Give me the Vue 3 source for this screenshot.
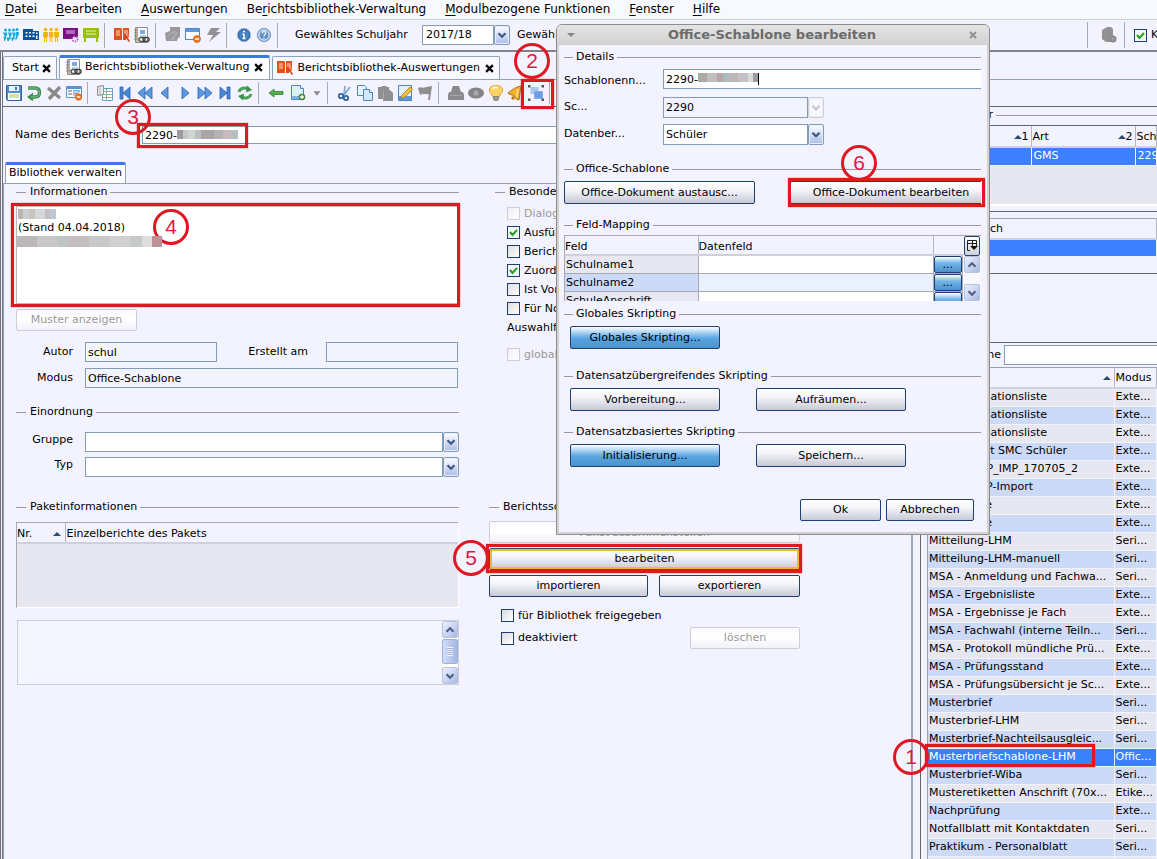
<script setup>
import { ref } from 'vue'

const icons = {
  pupils: '<g fill="#19a9dc"><circle cx="2.500" cy="3" r="1.500"/><circle cx="6.500" cy="3" r="1.500"/><circle cx="10.500" cy="3" r="1.500"/><circle cx="14" cy="2.500" r="1.500"/><path d="M0 5.500h4v3l-1 1v3H1.500v-4zM5 5.500h3.500v3l-1 1v3H6v-4zM9 5.500h3.500v3l-1 1v3H10v-4zM13 5h3l-.5 3.500-1 1v2H13zM0 10h2v4H1v-3zM3.500 10.500H6V14H4.500zM8 10.500h2V14H9zM12 10.500h2L13 14z"/></g>',
  school: '<path d="M0 2h10v2h6v9H0z" fill="#07539b"/><path d="M2.500 5h2v1.500h-2zm3.500 0h2v1.500H6zm3.500 0h2v1.500h-2zM2.500 8.500h2V10h-2zm3.500 0h2V10H6zm3.500 0h2V10h-2zM13 5.500h1.500V7H13zm0 3h1.500V12H13z" fill="#fff"/>',
  parents: '<g fill="#f5b50a"><circle cx="2.500" cy="2.500" r="1.800"/><circle cx="8" cy="2.500" r="1.800"/><circle cx="13.500" cy="2.500" r="1.800"/><path d="M0 5h5v5H4v5H3v-4H2v4H1v-5H0zM5.800 5h4.400v5H9.500v5h-1v-4h-1v4h-1v-5h-.7zM11 5h5v5h-1v5h-1v-4h-1v4h-1v-5h-1z"/></g>',
  boardPurple: '<path d="M0 1h15v9h-5l-1 2H0z" fill="#7b0f86"/><path d="M3 4h9M3 6h9" stroke="#e3c3e6"/><circle cx="12" cy="12" r="2.500" fill="none" stroke="#b45fba" stroke-width="2" stroke-dasharray="1.500 1"/>',
  boardGreen: '<path d="M0 1h16v10H0zM1 11h2v4H1zM13 11h2v4h-2z" fill="#97bf0d"/><path d="M3 4h10M3 7h10" stroke="#e9f3c3"/>',
  book: '<path d="M0 1h7l1 1V13H0zM9 1h6v8l-3-2v6H9z" fill="#e2501b"/><path d="M2 4h4M2 6h4M2 8h4M10 4h4M10 6h4" stroke="#fbd9cb"/><path d="M10 7l6 3-2.300.5L16 14l-1.500 1-2-3.500-2 1.500z" fill="#d94716"/>',
  report: '<path d="M1.500.5h12v15h-12z" fill="#fafbfd" stroke="#8d8d90"/><path d="M3 1v14" stroke="#9a7440"/><path d="M0 3h4M0 6h4M0 9h4M0 12h4" stroke="#888"/><path d="M6 3h5v4H6z" fill="#7facdf"/><path d="M6 9h6" stroke="#7facdf"/><rect x="5" y="10.500" width="6" height="4" rx="2" fill="none" stroke="#555" stroke-width="1.500"/><rect x="9" y="10.500" width="6" height="4" rx="2" fill="none" stroke="#444" stroke-width="1.500"/>',
  tiles: '<path d="M5 0h10v10l-2 1-1 3H1L0 6l2-1 3-1z" fill="#9a9a9c"/><path d="M3 9l3-3h3v-2l3 2-3 3v3H6l3-2" stroke="#b5b5b8" fill="none" stroke-width="1"/>',
  windowMinus: '<path d="M.5 1.500h14v11H.5z" fill="#fdfdff" stroke="#4b87c5"/><path d="M1 2h13v3H1z" fill="#5d9bd8"/><circle cx="12" cy="12" r="3.500" fill="#ef7622" stroke="#d45a10" stroke-width=".7"/><path d="M10 12h4" stroke="#fff" stroke-width="1.500"/>',
  bolt: '<path d="M6 1h9l-4 4h5L4 15l4-7H2z" fill="#929294"/>',
  info: '<circle cx="8" cy="8" r="6.700" fill="#4b83c1" stroke="#9db9da"/><circle cx="8" cy="8" r="5.500" fill="none" stroke="#2f65a5"/><path d="M8 7v4M6.500 7H8M6.500 11.500h3" stroke="#fff" stroke-width="1.500"/><circle cx="8" cy="4.500" r="1" fill="#fff"/>',
  help: '<circle cx="8" cy="8" r="6.700" fill="#8fb2db" stroke="#7e9fc8"/><circle cx="8" cy="8" r="5" fill="#5d8dc7" stroke="#e7effa"/><path d="M6.200 6.500c0-2.500 3.800-2.300 3.600-.2C9.700 7.500 8 7.500 8 9" fill="none" stroke="#fff" stroke-width="1.300"/><circle cx="8" cy="11" r=".8" fill="#fff"/>',
  save: '<path d="M.5.5h15v15h-14l-1-1z" fill="#5289c9" stroke="#2f62a4"/><path d="M3 1h10v5H3z" fill="#e8f0fa"/><path d="M9 2h2v3H9z" fill="#3f73b4"/><path d="M2 8h12v7H2z" fill="#fff"/><path d="M3 10h10M3 12h10" stroke="#a6c659"/>',
  undo: '<path d="M2 3h7c3 0 4.500 2 4.500 4.500S12 12 9 12H5" fill="none" stroke="#3c8f50" stroke-width="3.400"/><path d="M7 7.500v9L1 12z" fill="#3c8f50"/><path d="M2 3h7c3 0 4.500 2 4.500 4.500S12 12 9 12H5" fill="none" stroke="#7ec584" stroke-width="1"/>',
  cross: '<path d="M2 3l12 10M14 2L3 14" stroke="#8a8a8d" stroke-width="3.400"/>',
  formMinus: '<path d="M.5 1.500h15v11H.5z" fill="#f5f8fd" stroke="#5c93cf"/><path d="M1 2h14v2H1z" fill="#5c93cf"/><path d="M2 6h4M2 9h4" stroke="#666"/><path d="M7.500 5.500h6v1.500h-6zM7.500 8.500h4v1.500h-4z" fill="#fff" stroke="#79a6d8"/><circle cx="12.500" cy="12" r="3.200" fill="#ef7622" stroke="#d45a10" stroke-width=".7"/><path d="M10.700 12h3.600" stroke="#fff" stroke-width="1.300"/>',
  sheet: '<path d="M5.500 3.500h10v12h-10z" fill="#fff" stroke="#6f9cc8"/><path d="M6 6.500h9M6 9.500h9M6 12.500h9M9.500 4v11" stroke="#86b38d"/><path d="M.5 1.500l6-1v9l-6 1z" fill="#ececec" stroke="#8e8e8e"/><path d="M3 1v9" stroke="#aaa"/>',
  first: '<path d="M3 2h3v12H3zM13 2v12L6 8z" fill="#4a86d6" stroke="#2b62b2" stroke-width=".8"/>',
  rewind: '<path d="M8 2v12L1 8zM15 2v12L8 8z" fill="#5d98e2" stroke="#2b62b2" stroke-width=".8"/>',
  back: '<path d="M11 2v12L4 8z" fill="#5d98e2" stroke="#2b62b2" stroke-width=".8"/>',
  next: '<path d="M5 2v12l7-6z" fill="#5d98e2" stroke="#2b62b2" stroke-width=".8"/>',
  forward: '<path d="M1 2v12l7-6zM8 2v12l7-6z" fill="#5d98e2" stroke="#2b62b2" stroke-width=".8"/>',
  last: '<path d="M10 2h3v12h-3zM3 2v12l7-6z" fill="#4a86d6" stroke="#2b62b2" stroke-width=".8"/>',
  refresh: '<path d="M2 7c1-4 6-5 9-3" fill="none" stroke="#4ba15a" stroke-width="3"/><path d="M10 .5L15 5l-6 2.500z" fill="#3c8f4c"/><path d="M14 9c-1 4-6 5-9 3" fill="none" stroke="#4ba15a" stroke-width="3"/><path d="M6 15.500L1 11l6-2.500z" fill="#3c8f4c"/>',
  left: '<path d="M1 8l5-4v2.500h9v3H6V12z" fill="#58ad4d" stroke="#357f38" stroke-width=".8"/>',
  docPlus: '<path d="M1.500.5h9l3 3v11h-12z" fill="#dfeefb" stroke="#4c86c6"/><path d="M10.500.5v3h3" fill="#fff" stroke="#4c86c6"/><path d="M2 11h11v3H2z" fill="#7db2e6"/><circle cx="12" cy="12" r="3.300" fill="#3d8a34"/><path d="M10 12h4M12 10v4" stroke="#fff" stroke-width="1.300"/>',
  cut: '<path d="M8 1l-1 9M13 2l-6 8" stroke="#87a9d0" stroke-width="1.800"/><circle cx="4" cy="11" r="2.200" fill="none" stroke="#2d66ac" stroke-width="1.800"/><circle cx="9" cy="13" r="2.200" fill="none" stroke="#2d66ac" stroke-width="1.800"/>',
  copy: '<path d="M.5.5h7l2 2v8h-9z" fill="#e6f1fc" stroke="#4c86c6"/><path d="M6.500 4.500h6l3 3v8h-9z" fill="#d5e7fa" stroke="#4c86c6"/><path d="M12.500 4.500v3h3" fill="#fff" stroke="#4c86c6"/>',
  paste: '<path d="M1 2h3l1-1h4l1 1h2v3h1l3 3v8H6v-2H1z" fill="#8f8f91"/><path d="M6.500 6v8" stroke="#a9a9ab"/>',
  edit: '<path d="M1.500.5h13v15h-13z" fill="#e3effb" stroke="#4c86c6"/><path d="M2 11h12v4H2z" fill="#5e9adb"/><path d="M13 2l2.500 2.500L8 12l-4 1.500L5 10z" fill="#f5c23c" stroke="#a8731a" stroke-width=".8"/>',
  flag: '<path d="M1 3c3-2 5 1 8-1l6-1-2 14h-2l1-6c-3 1-6-1-9 1z" fill="#8f8f91"/>',
  print: '<path d="M4 3l1-2h6l2 6h2l1 3v5H0v-5l1-3h2z" fill="#8a8a8d"/><path d="M2 10.500h12" stroke="#a8a8aa"/>',
  eye: '<ellipse cx="8" cy="8" rx="8" ry="5.500" fill="#858587"/><circle cx="8" cy="8" r="2.600" fill="#a9a9ab"/>',
  bulb: '<path d="M8 .5C1 .5 0 6 3 8.500L5 12h6l2-3.500C16 6 15 .5 8 .5z" fill="#fdd268" stroke="#e49b24"/><path d="M4.500 4c1-2 4-2 5-1.500" stroke="#fffbe0" stroke-width="2" fill="none"/><path d="M5.500 11.500h5v3l-1 1h-3l-1-1z" fill="#999" stroke="#666" stroke-width=".6"/>',
  bell: '<path d="M13 1c-5 1-8 3-13 7 1 2 4 1 6 3 2 3 3 4 5 4 1-5 1-9 2-14z" fill="#f0b02c" stroke="#a86f12"/><circle cx="5" cy="13" r="1.700" fill="#b87b18"/><path d="M10 4c-1 3-1 6-1 8" stroke="#ffe08a" fill="none" stroke-width="1.500"/>',
  group: '<path d="M2.500 2h8v7h-8z" fill="#a9c8f2"/><path d="M6.500 6.500h8v7h-8z" fill="#6d9be6" stroke="#84aef0"/><path d="M0 0h2.500v2.500H0zM13.500 0H16v2.500h-2.500zM0 13.500h2.500V16H0zM13.500 13.500H16V16h-2.500z" fill="#555"/>',
  dbPlus: '<path d="M1 3l5-3h4l2 2v13H5l-4-3z" fill="#929294"/><circle cx="12" cy="12" r="3.500" fill="#88888b"/><path d="M10 12h4M12 10v4" stroke="#aaa"/>'
}

const menus = [
  ['', 'D', 'atei'], ['', 'B', 'earbeiten'], ['', 'A', 'uswertungen'], ['Be', 'r', 'ichtsbibliothek-Verwaltung'],
  ['', 'M', 'odulbezogene Funktionen'], ['', 'F', 'enster'], ['', 'H', 'ilfe']
]
const mainTools = [
  ['pupils', 'school', 'parents', 'boardPurple', 'boardGreen'], ['book', 'report'], ['tiles', 'windowMinus', 'bolt'], ['info', 'help']
]
const recordTools = [
  ['save', 'undo', 'cross', 'formMinus'],
  ['sheet', 'first', 'rewind', 'back', 'next', 'forward', 'last', 'refresh'],
  ['left', 'docPlus', 'more'],
  ['cut', 'copy', 'paste', 'edit', 'flag'],
  ['print', 'eye', 'bulb', 'bell', 'group']
]
const options = ref([
  { label: 'Dialog', on: false, off: true },
  { label: 'Ausführen', on: true },
  { label: 'Bericht', on: false },
  { label: 'Zuordnen', on: true },
  { label: 'Ist Vorlage', on: false },
  { label: 'Für Noten', on: false }
])
const mapping = ['Schulname1', 'Schulname2', 'SchuleAnschrift']
// Reports whose beginning lies below the dialog carry the width of the whole name.
const reports = [
  { name: 'Informationsliste', mode: 'Exte...', w: 118 },
  { name: 'Informationsliste', mode: 'Exte...', w: 118 },
  { name: 'Informationsliste', mode: 'Exte...', w: 118 },
  { name: 'Import SMC Schüler', mode: 'Exte...', w: 138 },
  { name: 'LDAP_IMP_170705_2', mode: 'Exte...', w: 149 },
  { name: 'LDAP-Import', mode: 'Exte...', w: 104 },
  { name: 'Liste', mode: 'Exte...', w: 63 },
  { name: 'Liste', mode: 'Exte...', w: 63 },
  { name: 'Mitteilung-LHM', mode: 'Seri...' },
  { name: 'Mitteilung-LHM-manuell', mode: 'Seri...' },
  { name: 'MSA - Anmeldung und Fachwa...', mode: 'Seri...' },
  { name: 'MSA - Ergebnisliste', mode: 'Exte...' },
  { name: 'MSA - Ergebnisse je Fach', mode: 'Exte...' },
  { name: 'MSA - Fachwahl (interne Teiln...', mode: 'Seri...' },
  { name: 'MSA - Protokoll mündliche Prü...', mode: 'Exte...' },
  { name: 'MSA - Prüfungsstand', mode: 'Exte...' },
  { name: 'MSA - Prüfungsübersicht je Sc...', mode: 'Exte...' },
  { name: 'Musterbrief', mode: 'Seri...' },
  { name: 'Musterbrief-LHM', mode: 'Seri...' },
  { name: 'Musterbrief-Nachteilsausgleic...', mode: 'Seri...' },
  { name: 'Musterbriefschablone-LHM', mode: 'Offic...', selected: true },
  { name: 'Musterbrief-Wiba', mode: 'Seri...' },
  { name: 'Musteretiketten Anschrift (70x...', mode: 'Etike...' },
  { name: 'Nachprüfung', mode: 'Exte...' },
  { name: 'Notfallblatt mit Kontaktdaten', mode: 'Seri...' },
  { name: 'Praktikum - Personalblatt', mode: 'Seri...' }
]
</script>

<template>
  <div class="app">
    <nav class="menubar">
      <button v-for="m in menus" :key="m[2]" type="button">{{ m[0] }}<u>{{ m[1] }}</u>{{ m[2] }}</button>
    </nav>

    <div class="toolbar main-tools">
      <div v-for="(g, i) in mainTools" :key="i" class="tool-group">
        <button v-for="t in g" :key="t" type="button" class="tool" :aria-label="t"><svg viewBox="0 0 16 16" v-html="icons[t]"></svg></button>
      </div>
      <label class="year-label" for="year">Gewähltes Schuljahr</label>
      <span class="combo year">
        <select id="year"><option>2017/18</option></select>
        <svg class="arrow" viewBox="0 0 16 16"><path d="M4 6l4 4 4-4" /></svg>
      </span>
      <span class="half-label">Gewähltes</span>
      <div class="tools-right">
        <button type="button" class="tool" aria-label="dbPlus"><svg viewBox="0 0 16 16" v-html="icons.dbPlus"></svg></button>
        <i class="bar"></i>
        <label class="check"><input type="checkbox" checked>K</label>
      </div>
    </div>

    <main class="work">
      <section class="editor">
        <div class="tabs">
          <button type="button" class="tab">Start<svg class="close" viewBox="0 0 8 8"><path d="M1 1l6 6M7 1L1 7" /></svg></button>
          <button type="button" class="tab active"><svg class="tab-icon" viewBox="0 0 16 16" v-html="icons.report"></svg>Berichtsbibliothek-Verwaltung<svg class="close" viewBox="0 0 8 8"><path d="M1 1l6 6M7 1L1 7" /></svg></button>
          <button type="button" class="tab"><svg class="tab-icon" viewBox="0 0 16 16" v-html="icons.book"></svg>Berichtsbibliothek-Auswertungen<svg class="close" viewBox="0 0 8 8"><path d="M1 1l6 6M7 1L1 7" /></svg></button>
        </div>
        <div class="toolbar record-tools">
          <div v-for="(g, i) in recordTools" :key="i" class="tool-group">
            <button v-for="t in g" :key="t" type="button" class="tool" :class="'act-' + t" :aria-label="t">
              <svg v-if="t !== 'more'" viewBox="0 0 16 16" v-html="icons[t]"></svg>
              <svg v-else viewBox="0 0 16 16"><path d="M4 6h8l-4 5z" fill="#8a8a8d" /></svg>
            </button>
          </div>
        </div>

        <div class="form">
          <div class="name-row">
            <label for="bname">Name des Berichts</label>
            <span class="field"><input id="bname" type="text" value="2290-"><i class="mosaic m-name"></i></span>
          </div>
          <button type="button" class="tab active subtab">Bibliothek verwalten</button>
          <div class="panel">
            <section>
              <h2 class="title">Informationen</h2>
              <div class="info-box">
                <i class="mosaic m-info1"></i>
                <p>(Stand 04.04.2018)</p>
              </div>
              <button type="button" class="btn muster" disabled>Muster anzeigen</button>
              <div class="author-row">
                <label for="autor">Autor</label><input id="autor" type="text" readonly value="schul">
                <label for="erstellt" class="made">Erstellt am</label><input id="erstellt" type="text" readonly>
              </div>
              <div class="mode-row"><label for="modus">Modus</label><input id="modus" type="text" readonly value="Office-Schablone"></div>
              <h2 class="title einordnung">Einordnung</h2>
              <div class="mode-row group-row">
                <label for="gruppe">Gruppe</label>
                <span class="combo"><select id="gruppe"><option></option></select><svg class="arrow" viewBox="0 0 16 16"><path d="M4 6l4 4 4-4" /></svg></span>
              </div>
              <div class="mode-row type-row">
                <label for="typ">Typ</label>
                <span class="combo"><select id="typ"><option></option></select><svg class="arrow" viewBox="0 0 16 16"><path d="M4 6l4 4 4-4" /></svg></span>
              </div>
            </section>

            <section class="special">
              <h2 class="title">Besonderheiten</h2>
              <div class="options">
                <label v-for="o in options" :key="o.label" class="check" :class="{ off: o.off }"><input v-model="o.on" type="checkbox" :disabled="o.off">{{ o.label }}</label>
                <p>Auswahlfeld</p>
                <label class="check off global"><input type="checkbox" disabled>global</label>
              </div>
            </section>

            <section>
              <h2 class="title">Paketinformationen</h2>
              <div class="packet">
                <table>
                  <thead><tr><th class="nr"><span>Nr.</span><svg class="up" viewBox="0 0 8 4"><path d="M4 0l4 4H0z" /></svg></th><th>Einzelberichte des Pakets</th></tr></thead>
                </table>
              </div>
              <div class="note">
                <textarea aria-label="Beschreibung" readonly></textarea>
                <div class="scroll">
                  <button type="button" aria-label="auf"><svg viewBox="0 0 16 16"><path d="M4 10l4-4 4 4" /></svg></button>
                  <i class="thumb"></i>
                  <button type="button" aria-label="ab"><svg viewBox="0 0 16 16"><path d="M4 6l4 4 4-4" /></svg></button>
                </div>
              </div>
            </section>

            <section>
              <h2 class="title">Berichtsschablone</h2>
              <div class="actions">
                <button type="button" class="btn compose" disabled>Paket zusammenstellen</button>
                <button type="button" class="btn focus">bearbeiten</button>
                <div class="pair"><button type="button" class="btn">importieren</button><button type="button" class="btn">exportieren</button></div>
              </div>
              <div class="flags">
                <label class="check"><input type="checkbox">für Bibliothek freigegeben</label>
                <div class="last-row"><label class="check"><input type="checkbox">deaktiviert</label><button type="button" class="btn" disabled>löschen</button></div>
              </div>
            </section>
          </div>
        </div>
      </section>

      <aside class="side">
        <div class="side-tabs"></div>
        <div class="side-tools"></div>
        <section class="schools">
          <h2 class="title"><span>Filter</span></h2>
          <div class="frame">
            <table>
              <thead><tr><th class="s1"><svg class="up" viewBox="0 0 8 4"><path d="M4 0l4 4H0z" /></svg>1</th><th class="s2"><div>Art<span><svg class="up" viewBox="0 0 8 4"><path d="M4 0l4 4H0z" /></svg>2</span></div></th><th>Sch</th></tr></thead>
              <tbody><tr class="selected"><td></td><td>GMS</td><td>2290</td></tr></tbody>
            </table>
          </div>
        </section>
        <section class="areas">
          <table>
            <thead><tr><th><span>Bereich</span></th></tr></thead>
            <tbody><tr class="selected"><td></td></tr></tbody>
          </table>
        </section>
        <div class="blank"></div>
        <section class="library">
          <div class="search"><label for="suche">Suche</label><input id="suche" type="text"></div>
          <div class="frame">
            <table>
              <thead><tr><th class="r1"><svg class="up" viewBox="0 0 8 4"><path d="M4 0l4 4H0z" /></svg></th><th>Modus</th></tr></thead>
              <tbody>
                <tr v-for="(r, i) in reports" :key="i" :class="{ selected: r.selected }">
                  <td><span v-if="r.w" class="tail" :style="{ width: r.w + 'px' }">{{ r.name }}</span><template v-else>{{ r.name }}</template></td>
                  <td>{{ r.mode }}</td>
                </tr>
                <tr><td></td><td></td></tr>
              </tbody>
            </table>
          </div>
        </section>
      </aside>
    </main>

    <div class="dialog" role="dialog" aria-labelledby="dlg-title">
      <header>
        <svg class="tri" viewBox="0 0 8 8"><path d="M0 2h8l-4 4z" /></svg>
        <h1 id="dlg-title">Office-Schablone bearbeiten</h1>
        <button type="button" aria-label="schließen"><svg viewBox="0 0 8 8"><path d="M1 1l6 6M7 1L1 7" /></svg></button>
      </header>
      <div class="dlg-body">
        <h2 class="title">Details</h2>
        <div class="dlg-row name"><label for="dname">Schablonenn...</label><span class="field"><input id="dname" type="text" value="2290-"><i class="mosaic m-dlg"></i></span></div>
        <div class="dlg-row school">
          <label for="dsc">Sc...</label>
          <span class="combo off"><select id="dsc" disabled><option>2290</option></select><svg class="arrow" viewBox="0 0 16 16"><path d="M4 6l4 4 4-4" /></svg></span>
        </div>
        <div class="dlg-row area">
          <label for="ddb">Datenber...</label>
          <span class="combo"><select id="ddb"><option>Schüler</option></select><svg class="arrow" viewBox="0 0 16 16"><path d="M4 6l4 4 4-4" /></svg></span>
        </div>
        <h2 class="title t-office">Office-Schablone</h2>
        <div class="office-btns"><button type="button" class="btn">Office-Dokument austausc...</button><button type="button" class="btn">Office-Dokument bearbeiten</button></div>
        <h2 class="title t-map">Feld-Mapping</h2>
        <div class="mapping">
          <table>
            <thead><tr><th class="f1">Feld</th><th class="f2">Datenfeld</th><th></th></tr></thead>
            <tbody><tr v-for="f in mapping" :key="f"><td>{{ f }}</td><td></td><td><button type="button" class="dots">...</button></td></tr></tbody>
          </table>
          <div class="scroll">
            <button type="button" class="columns" aria-label="Spalten"><svg viewBox="0 0 14 16"><path d="M5 12.500H2.500v-10h9V8M2.500 5.500h9M7.500 3v5" /><path d="M5 8h8l-4 4z" class="solid" /></svg></button>
            <button type="button" aria-label="auf"><svg viewBox="0 0 16 16"><path d="M4 10l4-4 4 4" /></svg></button>
            <button type="button" aria-label="ab" class="down"><svg viewBox="0 0 16 16"><path d="M4 6l4 4 4-4" /></svg></button>
          </div>
        </div>
        <h2 class="title t-glob">Globales Skripting</h2>
        <div class="script-btns"><button type="button" class="btn blue">Globales Skripting...</button></div>
        <h2 class="title t-over">Datensatzübergreifendes Skripting</h2>
        <div class="script-btns"><button type="button" class="btn">Vorbereitung...</button><button type="button" class="btn">Aufräumen...</button></div>
        <h2 class="title t-base">Datensatzbasiertes Skripting</h2>
        <div class="script-btns"><button type="button" class="btn blue">Initialisierung...</button><button type="button" class="btn">Speichern...</button></div>
        <footer><button type="button" class="btn ok">Ok</button><button type="button" class="btn cancel">Abbrechen</button></footer>
      </div>
    </div>

    <i class="mark b1"></i><i class="mark b2"></i><i class="mark b3"></i><i class="mark b4"></i><i class="mark b5"></i><i class="mark b6"></i>
    <span v-for="n in 6" :key="n" class="step" :class="'step' + n">{{ n }}</span>
    <i class="mosaic m-info2"></i>
  </div>
</template>

<style>
html, body { margin: 0; height: 100%; overflow: hidden; }
#app { height: 100%; }
</style>

<style scoped>
* { box-sizing: border-box; }
.app { position: relative; display: flex; flex-direction: column; height: 100%; overflow: hidden; background: #f3f3ff; color: #000; font: 11px/14px "DejaVu Sans", sans-serif; }
button, input, select, textarea { font: inherit; color: inherit; margin: 0; padding: 0; border-radius: 0; outline: 0; }
button { background: none; border: 0; white-space: nowrap; }
h1, h2, p { margin: 0; font: inherit; }
svg { display: block; }

.menubar { flex: none; display: flex; gap: 19px; height: 20px; padding: 0 5px; background: #f8f8ff; border-bottom: 1px solid #cfcfdb; font-size: 12px; line-height: 17px; }
.menubar button { height: 18px; }
.menubar u { text-underline-offset: 2px; }

.toolbar { display: flex; align-items: center; }
.tool-group { display: flex; align-items: center; }
.tool-group::after { content: ""; width: 1px; height: 25px; margin: 0 7px 0 3px; background: #aaaab4; }
.tool { width: 20px; height: 20px; display: flex; align-items: center; justify-content: center; }
.tool svg { width: 16px; height: 16px; }
.act-docPlus { width: 24px; }
.act-more { width: 14px; }
.main-tools { flex: none; height: 32px; padding-left: 1px; border-bottom: 2px solid #808088; background: #f3f3ff; }
.year-label { margin-left: 10px; width: 127px; white-space: nowrap; }
.half-label { margin-left: 7px; }
.tools-right { margin-left: auto; display: flex; align-items: center; width: 70px; height: 26px; padding-left: 11px; border-left: 1px solid #aaaab4; overflow: hidden; }
.tools-right .bar { flex: none; width: 1px; height: 26px; margin: 0 9px 0 5px; background: #aaaab4; }
.tools-right .tool { flex: none; }
.year { width: 88px; height: 18px; }

.combo { display: flex; position: relative; height: 20px; }
.combo select { appearance: none; flex: 1; min-width: 0; height: 100%; padding: 0 3px; margin-right: 16px; border: 1px solid #7f9db9; background: #fff; opacity: 1; }
.combo .arrow { position: absolute; right: 0; top: 0; width: 16px; height: 100%; border: 1px solid #7f9db9; border-radius: 2px; background: linear-gradient(#fff, #d9e0f4 45%, #a9bbe4); fill: none; stroke: #3d5886; stroke-width: 2.500; box-shadow: inset 0 0 0 1px #e8edfb; pointer-events: none; }
.combo.off select { background: #f3f3ff; color: #000; }
.combo.off .arrow { border-color: #d0d0da; background: #f7f7fc; stroke: #c5c5cf; }

.work { flex: 1; min-height: 0; display: flex; }
.editor { flex: 1; min-width: 0; display: flex; flex-direction: column; border-left: 3px double #70707c; border-right: 2px solid #9aa8bd; }
.tabs { flex: none; display: flex; align-items: flex-end; gap: 2px; height: 28px; border-bottom: 1px solid #8fa3bd; }
.tab { display: flex; align-items: center; height: 23px; padding: 0 5px 0 8px; border: 1px solid #8fa3bd; border-bottom: 0; border-radius: 2px 2px 0 0; background: #f8f8ff; }
.tab.active { height: 24px; padding: 0 6px 3px; background: #fff; border-top: 3px solid #3c78ea; }
.tab-icon { width: 16px; height: 16px; margin-right: 3px; }
.tab:not(.active) .tab-icon { margin-left: -4px; margin-right: 4px; }
.close { width: 9px; height: 9px; margin-left: 5px; stroke: #000; stroke-width: 2; }
.tab:first-child .close { margin-left: 3px; }
.record-tools { flex: none; height: 27px; border-bottom: 1px solid #65656d; padding-left: 1px; }
.record-tools .tool-group::after { height: 22px; }

.form { flex: 1; min-height: 0; display: flex; flex-direction: column; padding-top: 19px; }
.name-row { display: flex; align-items: center; height: 18px; padding-left: 12px; }
.name-row label { width: 127px; white-space: nowrap; }
.field { position: relative; flex: 1; min-width: 0; display: flex; height: 100%; }
.field input { width: 100%; height: 100%; padding: 0 2px; border: 1px solid #7f9db9; background: #fff; }
.subtab.tab.active { align-self: flex-start; margin: 18px 0 0 2px; height: 21px; padding: 0 3px 3px; }
.panel { flex: 1; min-height: 0; border: solid #8fa3bd; border-width: 1px 0 0 1px; padding: 1px 10px 0 12px; display: grid; grid-template-columns: minmax(0, 443px) minmax(0, 311px); column-gap: 30px; align-content: start; }
.title { display: flex; align-items: center; height: 14px; white-space: nowrap; }
.title::before { content: ""; width: 10px; height: 1px; margin-right: 4px; background: #999; }
.title::after { content: ""; flex: 1; height: 1px; margin-left: 3px; background: #999; }
.info-box { height: 98px; margin-top: 7px; padding: 2px 1px; border: 1px solid #b6b6c2; background: #fff; }
.info-box p { margin-top: 2px; }
.mosaic { display: block; }
.m-name { position: absolute; left: 35px; top: 4px; width: 61px; height: 9px; background: linear-gradient(90deg, #9e9aa0 0 10%, #c6c6c8 10% 18%, #cfd6cf 18% 30%, #b8c0c4 30% 40%, #aaa3a8 40% 60%, #b5b2b5 60% 75%, #c9b8c0 75% 90%, #b2c2c4 90%); }
.m-info1 { width: 38px; height: 10px; background: linear-gradient(90deg, #bbb5ae 0 14%, #cbcdd3 14% 30%, #c9c2b8 30% 45%, #d5d7da 45% 70%, #c3bfc4 70% 85%, #bfc8d2 85%); }
.m-info2 { position: absolute; left: 17px; top: 236px; width: 145px; height: 11px; background: linear-gradient(90deg, #bcb8ba 0 14%, #c8c6c7 14% 28%, #bfc5c5 28% 36%, #c4bebf 36% 50%, #c8c8c8 50% 64%, #d2cfcf 64% 78%, #c6c9c9 78% 86%, #dedcdc 86% 93%, #bd9297 93%); }
.m-dlg { position: absolute; left: 35px; top: 4px; width: 61px; height: 12px; border-right: 1px solid #000; background: linear-gradient(90deg, #a9a9a6 0 15%, #c2bdbd 15% 32%, #b5a8ac 32% 42%, #aabcbf 42% 52%, #bcb6b6 52% 67%, #c4c0c8 67% 83%, #d7dfd3 83% 92%, #999aa5 92%) top / 100% 9px no-repeat; }

.btn { height: 22px; border: 1px solid #1f3f75; border-radius: 2px; background: linear-gradient(#fff, #f3f3fa 40%, #c9c9d6); }
.btn:disabled { border-color: #ceced8; background: linear-gradient(#fafaff, #fff 50%, #f0f0f8); color: #999; }
.btn.focus { border-color: #35506e; box-shadow: inset 0 0 0 2px #f5b440; }
.btn.blue { background: linear-gradient(#fff, #8fc3ee 35%, #58a5e2 55%, #4b92ca); }
.muster { display: block; width: 121px; margin-top: 5px; }
.compose { padding-top: 2px; }
.author-row { display: grid; grid-template-columns: 69px 132px 91px 18px 132px; height: 20px; margin-top: 11px; }
.author-row label, .mode-row label { padding: 3px 12px 0 0; text-align: right; }
.author-row .made { padding-right: 0; }
.author-row #erstellt { grid-column: 5; }
.mode-row { display: grid; grid-template-columns: 69px minmax(0, 1fr); height: 20px; margin-top: 6px; padding-right: 1px; }
.author-row input, .mode-row input { min-width: 0; height: 100%; padding: 0 2px; border: 1px solid #7f9db9; background: #f4f4ff; }
.einordnung { margin-top: 17px; }
.group-row { margin-top: 13px; padding-right: 0; }
.type-row { margin-top: 5px; padding-right: 0; }
.group-row label, .type-row label { padding-top: 1px; }
.panel > section:nth-child(n+3) { padding-top: 23px; }

.check { display: flex; align-items: center; height: 19px; white-space: nowrap; }
.check input { appearance: none; flex: none; width: 13px; height: 13px; margin-right: 4px; border: 1px solid #1c3f78; background: linear-gradient(135deg, #dcdce0, #fff); }
.check input:checked { background: url("data:image/svg+xml,%3Csvg xmlns='http://www.w3.org/2000/svg' viewBox='0 0 11 11'%3E%3Cpath d='M2 5l2.500 3L9 3' fill='none' stroke='%2321a121' stroke-width='2'/%3E%3C/svg%3E") #f4f4f4; }
.off { color: #999; }
.check.off input { border-color: #ceced8; background: linear-gradient(135deg, #f0f0f4, #fff); }
.special { padding-left: 6px; }
.options { padding: 5px 0 0 12px; }
.options p { height: 19px; line-height: 19px; }
.global { margin-top: 8px; }

table { border-collapse: collapse; table-layout: fixed; width: 100%; }
th, td { padding: 0; font-weight: normal; text-align: left; white-space: nowrap; overflow: hidden; }
.up { width: 8px; height: 4px; fill: #2b4a68; display: inline-block; vertical-align: middle; }
.packet { height: 86px; margin-top: 8px; border: 1px solid #a9a9af; border-right-color: #fff; border-bottom-color: #fff; background: #e7e7f1; }
.packet thead { background: #f3f3ff; }
.packet th { height: 20px; padding: 2px 0 0 1px; border-bottom: 2px solid #d0d0dc; }
.packet .nr { width: 48px; padding: 2px 3px 0 0; border-right: 1px solid #b5b5bf; }
.nr span { display: inline-block; width: 36px; }
.note { display: flex; height: 65px; margin-top: 12px; border: 1px solid #ceceda; margin-left: 1px; }
.note textarea { flex: 1; min-width: 0; resize: none; border: 0; background: #f5f5ff; }
.scroll { display: flex; flex-direction: column; justify-content: space-between; width: 16px; background: #fff; }
.scroll button { width: 16px; height: 17px; border: 1px solid #b6c3e4; border-radius: 2px; background: linear-gradient(135deg, #eef2ff, #c6d1f0 60%, #a7b6dc); }
.scroll svg { width: 14px; height: 14px; fill: none; stroke: #4d6185; stroke-width: 2.500; }
.thumb { height: 25px; margin-bottom: 3px; border: 1px solid #9fb1dc; border-radius: 2px; background: repeating-linear-gradient(#f2f5ff 0 1px, #9fb1dc 1px 2px) center / 6px 9px no-repeat, linear-gradient(90deg, #d3defb, #a5b6e0); }

.actions { display: grid; gap: 5px; margin-top: 7px; }
.pair { display: grid; grid-template-columns: 159fr 141fr; gap: 11px; }
.flags { padding: 9px 0 0 12px; }
.last-row { display: flex; justify-content: space-between; align-items: center; margin-top: 2px; }
.last-row .btn { width: 110px; }

.side { flex: none; width: 244px; display: flex; flex-direction: column; overflow: hidden; }
.side-tabs { flex: none; height: 28px; border-bottom: 1px solid #8fa3bd; }
.side-tools { flex: none; height: 27px; border-bottom: 1px solid #65656d; }
.side > section, .blank { margin-left: 7px; padding-left: 6px; border-left: 1px solid #65656d; }
.schools { flex: none; height: 105px; padding-top: 1px; border-bottom: 1px solid #65656d; }
.schools .title span { width: 52px; text-align: right; }
.frame { border-left: 1px solid #a0a0a8; background: #e7e7f1; }
.schools .frame { margin-top: 3px; height: 81px; border-top: 1px solid #65656d; border-bottom: 2px solid #fff; }
.side thead { background: #f3f3ff; }
.side th { height: 21px; border-bottom: 2px solid #d0d0dc; border-right: 1px solid #b5b5bf; padding-left: 1px; }
.schools th { padding-top: 2px; }
.side .selected td { background: #3d80ff; color: #fff; }
.side td { height: 18px; padding-left: 2px; border-right: 1px solid #f3f3ff; border-bottom: 1px solid #f3f3ff; }
.s1 { width: 103px; }
.side .s1 { text-align: right; padding-right: 2px; }
.s2 { width: 104px; }
.s2 div { display: flex; justify-content: space-between; padding-right: 2px; }
.areas { flex: none; height: 62px; padding-top: 6px; border-bottom: 1px solid #65656d; }
.areas table { border-top: 1px solid #a0a0a8; background: #dfe4f6; }
.areas th { height: 20px; padding-top: 1px; }
.areas th span { display: inline-block; width: 75px; text-align: right; }
.blank { flex: none; height: 69px; border-bottom: 1px solid #65656d; }
.library { flex: 1; min-height: 0; padding-top: 2px; }
.search { display: flex; align-items: center; height: 20px; }
.search label { width: 77px; padding-right: 3px; text-align: right; }
.search input { flex: 1; min-width: 0; height: 20px; border: 1px solid #7f9db9; border-right: 0; background: #fff; }
.library .frame { margin-top: 2px; border-top: 1px solid #a0a0a8; }
.library th { height: 20px; }
.library .r1 { width: 186px; text-align: right; padding-right: 3px; }
.library tbody tr:nth-child(even) td { background: #ccd9f7; }
.library tbody .selected td { background: #3d80ff; }
.library tbody td { height: 18px; padding-left: 1px; line-height: 14px; }
.tail { display: inline-block; text-align: right; height: 14px; vertical-align: top; }

.dialog { position: absolute; left: 556px; top: 24px; width: 434px; border: solid #8d8d8d; border-width: 1px; border-radius: 6px 6px 0 0; background: #f3f3ff; box-shadow: inset 2px 0 #d2d2d2, inset -2px -2px #d2d2d2; }
.dialog header { display: flex; align-items: center; height: 20px; padding: 0 12px 0 10px; border-radius: 5px 5px 0 0; background: linear-gradient(#e4e4e4, #d2d2d2); }
.dialog h1 { flex: 1; text-align: center; font-size: 13px; font-weight: bold; line-height: 20px; color: #6b6b6b; }
.tri { width: 8px; height: 8px; fill: #858585; }
.dialog header button svg { width: 8px; height: 8px; stroke: #909090; stroke-width: 2; }
.dlg-body { margin: 0 8px 0 7px; padding: 5px 0 13px; overflow: hidden; }
.dlg-body .title::before { width: 9px; margin-right: 3px; }
.dlg-row { display: flex; height: 21px; }
.dlg-row label { width: 99px; padding-top: 3px; }
.dlg-row .combo { width: 161px; height: 21px; }
.dlg-row.name { height: 20px; margin-top: 5px; }
.dlg-row.name label { padding-top: 5px; }
.dlg-row.name .field input { border-right: 0; }
.dlg-row.school { margin-top: 8px; }
.dlg-row.area { margin-top: 6px; }
.dlg-row select { padding: 0 2px; }
.t-office { margin-top: 17px; }
.office-btns { display: flex; gap: 35px; margin-top: 5px; }
.office-btns .btn { flex: none; width: 191px; height: 23px; }
.office-btns .btn:last-child { width: 202px; }
.t-map { margin-top: 14px; }
.mapping { display: flex; height: 66px; margin-top: 3px; overflow: hidden; border-top: 1px solid #a9a9af; border-left: 1px solid #a9a9af; }
.mapping table { flex: 1; height: 73px; }
.mapping th { height: 19px; padding-top: 2px; line-height: 15px; border-bottom: 2px solid #d0d0dc; }
.mapping th + th { border-left: 1px solid #b5b5bf; }
.mapping td { height: 18px; padding-left: 1px; border: solid #a9a9b3; border-width: 0 1px 1px 0; background: #fff; }
.mapping td:first-child { background: #e7e7f1; }
.mapping tr:nth-child(even) td { background: #e9f0ff; }
.mapping tr:nth-child(even) td:first-child { background: #ccd9f7; }
.mapping td:last-child { padding: 0; }
.f1 { width: 133px; }
.f2 { width: 235px; }
.dots { display: block; width: 100%; height: 17px; border: 1px solid #1f3f75; border-radius: 2px; background: linear-gradient(#fff, #74b5ea 40%, #4b92ca); line-height: 14px; }
.mapping .scroll { justify-content: flex-start; width: 18px; padding: 0 1px; background: #f8f8ff; }
.mapping .scroll button { flex: none; }
.mapping .scroll .columns { height: 20px; border-color: #1f3f75; background: linear-gradient(#fff, #d0d0da); }
.scroll .columns svg { width: 14px; height: 16px; stroke: #222; stroke-width: 1; }
.columns .solid { fill: #111; stroke: none; }
.mapping .scroll .down { margin-top: 11px; }
.t-glob { margin-top: 6px; }
.script-btns { display: flex; gap: 36px; margin: 5px 0 0 6px; }
.script-btns .btn { width: 150px; height: 23px; }
.t-over { margin-top: 20px; }
.t-base { margin-top: 14px; }
.dialog footer { display: flex; justify-content: flex-end; gap: 5px; margin: 32px 7px 0 0; }
.ok { width: 81px; }
.cancel { width: 88px; }

.mark { position: absolute; border: 3px solid #e01824; box-shadow: 0 0 1px #e01824; pointer-events: none; }
.b1 { left: 925px; top: 744px; width: 170px; height: 23px; }
.b2 { left: 521px; top: 79px; width: 33px; height: 30px; }
.b3 { left: 137px; top: 123px; width: 111px; height: 25px; }
.b4 { left: 11px; top: 203px; width: 449px; height: 104px; }
.b5 { left: 486px; top: 544px; width: 316px; height: 29px; }
.b6 { left: 788px; top: 178px; width: 197px; height: 29px; }
.step { position: absolute; width: 36px; height: 36px; border: 3px solid #e01824; border-radius: 50%; color: #e01840; font: 21px/29px "Liberation Sans", sans-serif; text-align: center; }
.step1 { left: 893px; top: 739px; }
.step2 { left: 514px; top: 43px; }
.step3 { left: 115px; top: 99px; }
.step4 { left: 153px; top: 209px; }
.step5 { left: 453px; top: 540px; }
.step6 { left: 841px; top: 145px; }
</style>
